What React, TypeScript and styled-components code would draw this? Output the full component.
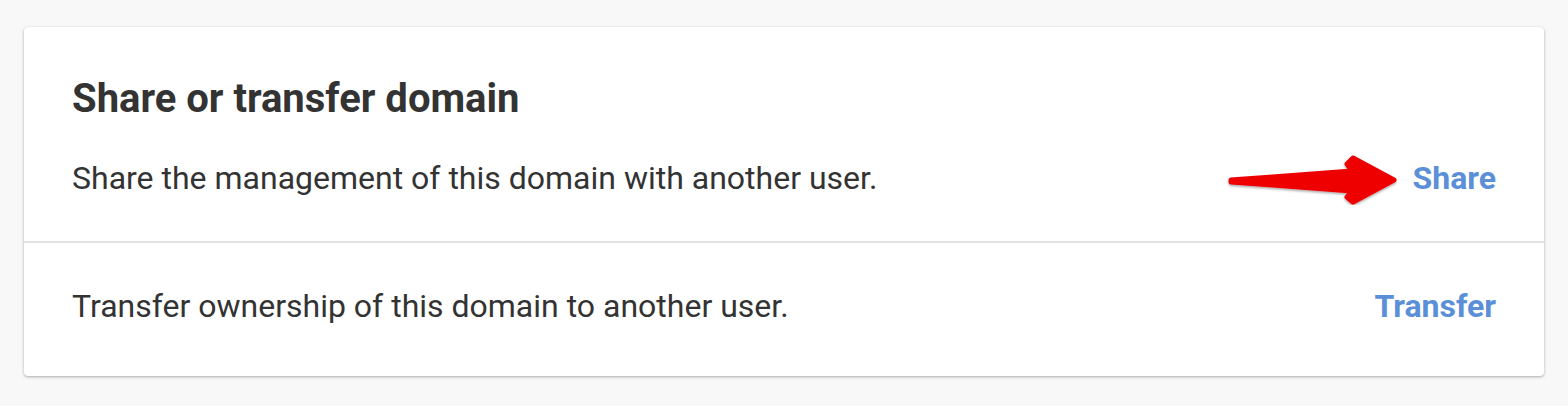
import React from "react";
import styled, { createGlobalStyle } from "styled-components";

const GlobalStyle = createGlobalStyle`
  html, body {
    margin: 0;
    padding: 0;
    background: #f8f8f8;
  }
  body {
    font-family: Roboto, "Noto Sans", Arial, sans-serif;
    color: #333333;
  }
`;

const Page = styled.div`
  padding: 27px 24px 30px 24px;
`;

const Card = styled.section`
  background: #ffffff;
  border-radius: 4px;
  box-shadow: 0 1px 3px rgba(0, 0, 0, 0.3), 0 0 1px rgba(0, 0, 0, 0.1);
  display: flex;
  flex-direction: column;
`;

const Header = styled.div`
  padding: 48px 48px 36px 48px;
`;

const Title = styled.h2`
  margin: 0 0 28px 0;
  font-size: 40px;
  line-height: 48px;
  font-weight: 700;
  color: #333333;
`;

const Row = styled.div<{ $pt: number; $pb: number; $px: number }>`
  display: flex;
  align-items: center;
  padding: ${(p) => `${p.$pt}px ${p.$px}px ${p.$pb}px`};
  gap: 16px;
`;

const Description = styled.p`
  margin: 0;
  flex: 1;
  font-size: 32px;
  line-height: 36px;
  color: #333333;
`;

const ActionLink = styled.a`
  font-size: 32px;
  line-height: 36px;
  font-weight: 700;
  color: #5b8fd8;
  text-decoration: none;
  cursor: pointer;
`;

const Divider = styled.hr`
  margin: 0;
  border: none;
  border-top: 2px solid #e3e3e3;
`;

const ArrowSvg = styled.svg`
  display: block;
  flex: none;
`;

function Arrow() {
  return (
    <ArrowSvg width="176" height="54" viewBox="0 0 176 54">
      <defs>
        <filter id="sh" x="-10%" y="-20%" width="120%" height="150%">
          <feDropShadow dx="0" dy="1.5" stdDeviation="1" floodColor="#000" floodOpacity="0.35" />
        </filter>
      </defs>
      <path
        d="M10 29 L131 20 L126 13 L132 7 L173 29 L132 51 L126 46 L131 40 L10 31 Z"
        fill="#ee0000"
        stroke="#ee0000"
        strokeWidth="5"
        strokeLinejoin="round"
        filter="url(#sh)"
      />
    </ArrowSvg>
  );
}

export default function App() {
  return (
    <>
      <GlobalStyle />
      <Page>
        <Card>
          <Header>
            <Title>Share or transfer domain</Title>
            <Row $pt={0} $pb={0} $px={0}>
              <Description>Share the management of this domain with another user.</Description>
              <Arrow />
              <ActionLink>Share</ActionLink>
            </Row>
          </Header>
          <Divider />
          <Row $pt={45} $pb={52} $px={48}>
            <Description>Transfer ownership of this domain to another user.</Description>
            <ActionLink>Transfer</ActionLink>
          </Row>
        </Card>
      </Page>
    </>
  );
}
